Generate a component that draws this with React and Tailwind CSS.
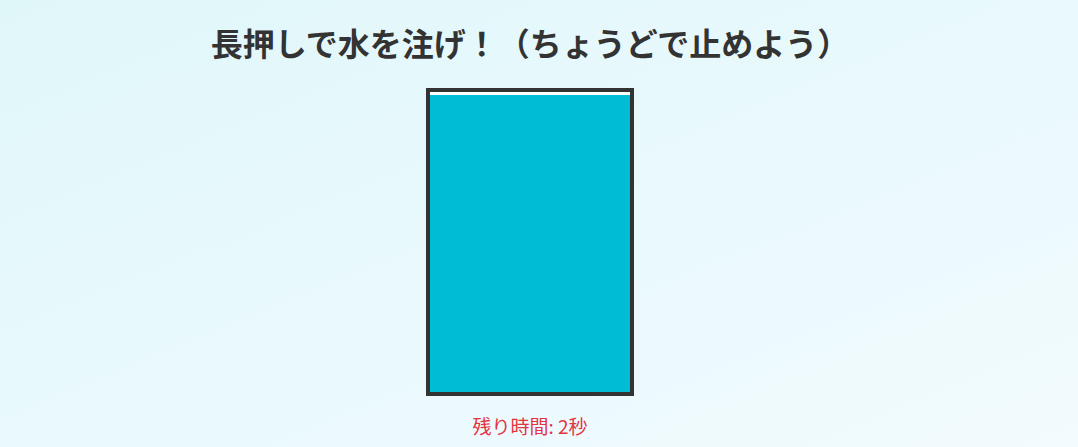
export default function App() {
  const level = 99;
  return (
    <div
      className="w-full h-[447px] overflow-hidden bg-gradient-to-br from-[#e0f7fa] to-[#f2fbfe] flex flex-col items-center pr-[18px] pt-[18px]"
      style={{ fontFamily: '"Noto Sans CJK JP", "Noto Sans", sans-serif' }}
    >
      <h1 className="text-[32px] leading-[48px] font-bold text-[#333333] whitespace-nowrap">
        長押しで水を注げ！（ちょうどで止めよう）
      </h1>
      <div className="mt-[22px] w-[208px] h-[308px] border-4 border-[#333333] bg-white flex flex-col justify-end">
        <div className="w-full bg-[#00bcd4]" style={{ height: `${level}%` }} />
      </div>
      <p className="mt-[16px] text-[19px] leading-[28px] text-[#e3343f]">残り時間: 2秒</p>
    </div>
  );
}
